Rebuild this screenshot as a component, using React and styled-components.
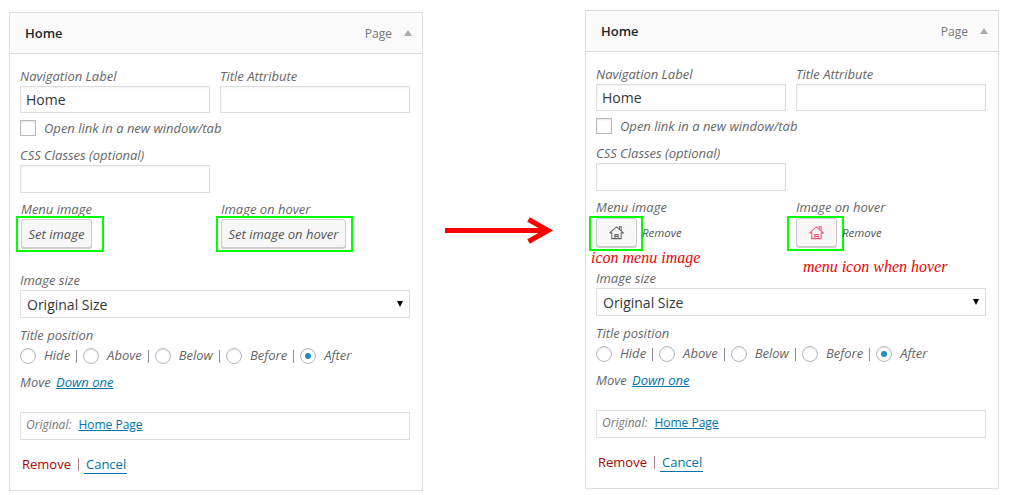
import React from 'react';
import styled, { createGlobalStyle } from 'styled-components';

const Global = createGlobalStyle`
  html, body { margin: 0; padding: 0; background: #fff; }
  body { font-family: "Open Sans", sans-serif; font-size: 13px; color: #666; }
`;

const Page = styled.div`
  display: flex;
  align-items: flex-start;
  width: 1020px;
  height: 495px;
  padding-left: 9px;
  box-sizing: border-box;
  overflow: hidden;
`;

const Card = styled.section`
  width: 414px;
  height: ${p => p.$height}px;
  box-sizing: border-box;
  margin-top: ${p => p.$top}px;
  border: 1px solid #dfdfdf;
  flex: none;
`;

const Header = styled.header`
  height: 41px;
  box-sizing: border-box;
  display: flex;
  align-items: center;
  background: #fafafa;
  border-bottom: 1px solid #dfdfdf;
  padding: 0 10px 0 15px;
`;

const Title = styled.h3`
  margin: 0;
  flex: 1;
  font-size: 13px;
  font-weight: 600;
  color: #23282d;
`;

const Kind = styled.span`
  font-size: 12px;
  color: #72777c;
  margin-right: 12px;
`;

const Caret = styled.span`
  width: 0;
  height: 0;
  border-left: 4.5px solid transparent;
  border-right: 4.5px solid transparent;
  border-bottom: 6px solid #a8adb2;
`;

const Body = styled.div`
  padding: 12px 12px 0 10px;
  display: flex;
  flex-direction: column;
`;

const Columns = styled.div`
  display: grid;
  grid-template-columns: 190px 190px;
  column-gap: 10px;
  margin-top: ${p => p.$gap || 0}px;
`;

const Label = styled.div`
  font-style: italic;
  font-size: 13px;
  line-height: 20px;
  height: 20px;
  color: #666;
  margin-top: ${p => p.$gap || 0}px;
  padding-left: ${p => p.$indent || 0}px;
  white-space: nowrap;
`;

const TextInput = styled.input`
  display: block;
  width: 190px;
  height: ${p => p.$h || 28}px;
  box-sizing: border-box;
  border: 1px solid #ddd;
  box-shadow: inset 0 1px 2px rgba(0,0,0,.05);
  padding: 0 5px;
  margin: 0;
  font: 14px "Open Sans", sans-serif;
  color: #32373c;
  background: #fff;
  outline: none;
`;

const CheckRow = styled.label`
  display: flex;
  align-items: center;
  height: 16px;
  margin-top: 7px;
  font-style: italic;
  font-size: 13px;
  color: #666;
`;

const CheckBox = styled.input.attrs({ type: 'checkbox' })`
  appearance: none;
  width: 16px;
  height: 16px;
  margin: 0 8px 0 0;
  box-sizing: border-box;
  border: 1px solid #b4b9be;
  background: #fff;
  box-shadow: inset 0 1px 2px rgba(0,0,0,.1);
`;

const ImageRow = styled.div`
  height: 29px;
  display: flex;
  align-items: flex-start;
`;

const ImageButton = styled.button`
  position: relative;
  height: 29px;
  width: ${p => p.$w ? `${p.$w}px` : 'auto'};
  margin: ${p => p.$top || 0}px 0 0 ${p => p.$indent || 0}px;
  padding: 0 6.5px;
  box-sizing: border-box;
  flex: none;
  display: flex;
  align-items: center;
  justify-content: center;
  border: 1px solid #cccccc;
  border-radius: 3px;
  background: #f7f7f7;
  box-shadow: 0 1px 0 #ccc;
  font: italic 13px "Open Sans", sans-serif;
  color: #555;
  white-space: nowrap;
`;

const Highlight = styled.span`
  position: absolute;
  left: ${p => p.$l}px;
  right: ${p => p.$r}px;
  top: ${p => p.$t}px;
  bottom: ${p => p.$b}px;
  border: 2px solid #00ff00;
  pointer-events: none;
`;

const RemoveImage = styled.a`
  position: relative;
  margin: ${p => p.$top}px 0 0 5px;
  font-style: italic;
  font-size: 11.5px;
  line-height: 29px;
  color: #555;
`;

const Note = styled.div`
  position: absolute;
  left: ${p => p.$x}px;
  top: ${p => p.$y}px;
  font: italic 16px/18px "Liberation Serif", serif;
  color: #f00000;
  white-space: nowrap;
`;

const ImageCol = styled.div`
  position: relative;
`;

const SelectWrap = styled.div`
  position: relative;
  width: 390px;
  height: 28px;
  &::after {
    content: '';
    position: absolute;
    right: 7px;
    top: 11px;
    border-left: 3px solid transparent;
    border-right: 3px solid transparent;
    border-top: 6px solid #000;
  }
`;

const Select = styled.select`
  appearance: none;
  display: block;
  width: 100%;
  height: 100%;
  box-sizing: border-box;
  border: 1px solid #ddd;
  border-radius: 0;
  padding: 0 6px;
  margin: 0;
  background: #fff;
  font: 14px "Open Sans", sans-serif;
  color: #32373c;
  outline: none;
`;

const RadioRow = styled.div`
  display: flex;
  align-items: center;
  height: 16px;
  margin-top: 3px;
  font-style: italic;
  font-size: 13px;
  color: #666;
`;

const Radio = styled.input.attrs({ type: 'radio' })`
  appearance: none;
  width: 16px;
  height: 16px;
  margin: 0 8px 0 0;
  box-sizing: border-box;
  border: 1px solid #b4b9be;
  border-radius: 50%;
  background: #fff;
  box-shadow: inset 0 1px 2px rgba(0,0,0,.1);
  display: grid;
  place-items: center;
  &:checked::before {
    content: '';
    width: 6px;
    height: 6px;
    border-radius: 50%;
    background: #1e8cbe;
  }
`;

const RadioText = styled.span`
  margin-bottom: 2px;
`;

const Separator = styled.span`
  width: 1px;
  height: 13px;
  background: #8d8f9a;
  margin: 0 6px 0 6px;
`;

const MoveRow = styled.div`
  height: 20px;
  line-height: 20px;
  margin-top: 8px;
  font-style: italic;
  font-size: 13px;
  color: #666;
`;

const Link = styled.a`
  color: #0073aa;
  text-decoration: underline;
  margin-left: ${p => p.$gap || 0}px;
`;

const OriginalBox = styled.div`
  height: 28px;
  box-sizing: border-box;
  margin-top: 20px;
  border: 1px solid #dfdfdf;
  padding: 0 5px 2px;
  display: flex;
  align-items: center;
  font-size: 12px;
  line-height: 20px;
`;

const OriginalLabel = styled.span`
  font-style: italic;
  color: #777;
`;

const Actions = styled.div`
  display: flex;
  align-items: center;
  height: 20px;
  margin-top: 14px;
  padding-left: 2px;
  font-size: 13px;
`;

const RemoveLink = styled.a`
  color: #a00;
`;

const ActionBar = styled.span`
  width: 1px;
  height: 13px;
  background: #b5818a;
  margin: 0 5px 0 7px;
`;

const CancelLink = styled.a`
  color: #0073aa;
  padding: 1px 1px 0 2px;
  line-height: 18px;
  border-bottom: 1px solid #0073aa;
`;

const ArrowSlot = styled.div`
  width: 162px;
  box-sizing: border-box;
  padding-left: 22px;
  flex: none;
  margin-top: 216px;
  display: flex;
`;

const HouseIcon = ({ color }) => (
  <svg width="15" height="15" viewBox="0 0 16 16" fill="none" stroke={color} strokeWidth="1.15">
    <path d="M0.6 8.4 L8 2 L15.4 8.4 H13 M0.6 8.4 H3" />
    <path d="M11 4.4 V1.8 H13 V6" />
    <path d="M3 8 V14.5 H13 V8" />
    <path d="M6.3 14.5 V10.3 H9.7 V14.5 M6.3 12.2 H9.7" />
  </svg>
);

const Arrow = () => (
  <svg width="112" height="30" viewBox="0 0 112 30">
    <path d="M0 14.5 H102" stroke="#ff0000" strokeWidth="5" />
    <path d="M83.5 3.5 L103 14.5 L83.5 25.5" fill="none" stroke="#ff0000" strokeWidth="5" />
  </svg>
);

const radios = ['Hide', 'Above', 'Below', 'Before', 'After'];

const MenuCard = ({ top, variant }) => {
  const done = variant === 'done';
  return (
    <Card $top={top} $height={479}>
      <Header>
        <Title>Home</Title>
        <Kind>Page</Kind>
        <Caret />
      </Header>
      <Body>
        <Columns>
          <div>
            <Label>Navigation Label</Label>
            <TextInput defaultValue="Home" $h={27} />
          </div>
          <div>
            <Label>Title Attribute</Label>
            <TextInput $h={27} />
          </div>
        </Columns>
        <CheckRow>
          <CheckBox />
          Open link in a new window/tab
        </CheckRow>
        <Label $gap={9}>CSS Classes (optional)</Label>
        <TextInput />
        <Columns $gap={6}>
          <ImageCol>
            <Label $indent={done ? 0 : 1}>Menu image</Label>
            <ImageRow>
              {done ? (
                <>
                  <ImageButton $w={41} $top={1}>
                    <HouseIcon color="#666" />
                    <Highlight $l={-8} $r={-7} $t={-3} $b={-5} />
                  </ImageButton>
                  <RemoveImage $top={1}>Remove</RemoveImage>
                </>
              ) : (
                <ImageButton $indent={1}>
                  Set image
                  <Highlight $l={-6} $r={-13} $t={-4} $b={-5} />
                </ImageButton>
              )}
            </ImageRow>
            {done && <Note $x={-5} $y={52}>icon menu image</Note>}
          </ImageCol>
          <ImageCol>
            <Label $indent={done ? 0 : 1}>Image on hover</Label>
            <ImageRow>
              {done ? (
                <>
                  <ImageButton $w={41} $top={1}>
                    <HouseIcon color="#f4557e" />
                    <Highlight $l={-10} $r={-8} $t={-3} $b={-5} />
                  </ImageButton>
                  <RemoveImage $top={1}>Remove</RemoveImage>
                </>
              ) : (
                <ImageButton $indent={1}>
                  Set image on hover
                  <Highlight $l={-6} $r={-8} $t={-4} $b={-5} />
                </ImageButton>
              )}
            </ImageRow>
            {done && <Note $x={7} $y={61}>menu icon when hover</Note>}
          </ImageCol>
        </Columns>
        <Label $gap={22}>Image size</Label>
        <SelectWrap>
          <Select defaultValue="Original Size">
            <option>Original Size</option>
          </Select>
        </SelectWrap>
        <Label $gap={7}>Title position</Label>
        <RadioRow>
          {radios.map((r, i) => (
            <React.Fragment key={r}>
              <Radio name={variant} defaultChecked={r === 'After'} />
              <RadioText>{r}</RadioText>
              {i < radios.length - 1 && <Separator />}
            </React.Fragment>
          ))}
        </RadioRow>
        <MoveRow>Move <Link $gap={2}>Down one</Link></MoveRow>
        <OriginalBox>
          <OriginalLabel>Original:</OriginalLabel>
          <Link $gap={7}>Home Page</Link>
        </OriginalBox>
        <Actions>
          <RemoveLink>Remove</RemoveLink>
          <ActionBar />
          <CancelLink>Cancel</CancelLink>
        </Actions>
      </Body>
    </Card>
  );
};

export default function App() {
  return (
    <Page>
      <Global />
      <MenuCard top={12} variant="start" />
      <ArrowSlot>
        <Arrow />
      </ArrowSlot>
      <MenuCard top={10} variant="done" />
    </Page>
  );
}
